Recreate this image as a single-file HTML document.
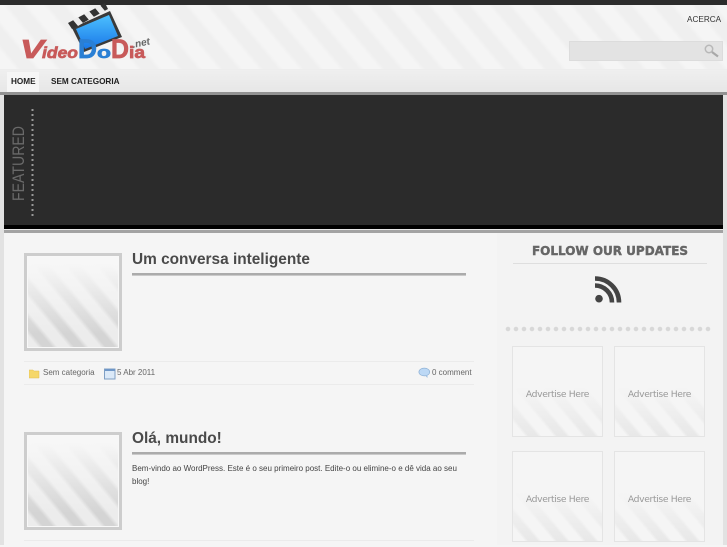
<!DOCTYPE html>
<html>
<head>
<meta charset="utf-8">
<style>
*{margin:0;padding:0;box-sizing:border-box}
html,body{width:727px;height:545px;overflow:hidden;background:#f5f5f5;font-family:"Liberation Sans",sans-serif}
.a{position:absolute}
#top{left:0;top:0;width:727px;height:5px;background:#2c2c2c}
#hdr{left:0;top:5px;width:727px;height:64px;background:repeating-linear-gradient(50deg,#f5f5f5 0,#f5f5f5 12px,#efefef 16px,#efefef 27px,#f5f5f5 31px)}
#nav{left:0;top:69px;width:727px;height:23px;background:linear-gradient(#efefef,#e7e7e7);border-top:1px solid #ededed}
#home{left:7px;top:72px;width:32px;height:20px;background:#f6f6f6}
.nv{font-size:8.2px;font-weight:bold;color:#222;top:77px;line-height:10px;white-space:nowrap}
#l1{left:0;top:92px;width:727px;height:3px;background:#929292}
#feat{left:4px;top:95px;width:719px;height:130px;background:#2b2b2b}
#blk{left:4px;top:225px;width:719px;height:4px;background:#000}
#l2{left:0;top:229px;width:727px;height:1px;background:#e8e8e8}
#l3{left:0;top:230px;width:727px;height:3px;background:#a3a3a3}
#sl{left:0;top:95px;width:4px;height:450px;background:#e2e2e2}
#sr{left:723px;top:95px;width:4px;height:450px;background:#e2e2e2}
#side{left:497px;top:233px;width:226px;height:312px;background:#f3f3f3}
.thumb{left:24px;width:98px;height:98px;border:3px solid #cdcdcd;outline:1px solid #f8f8f8;outline-offset:-4px;background:linear-gradient(#f7f7f7 8%,rgba(247,247,247,0) 85%),repeating-linear-gradient(50deg,#ececec 0,#ececec 9px,#d4d4d4 13px,#d4d4d4 20px,#ececec 24px)}
.ttl{left:132px;font-size:15.4px;font-weight:bold;color:#4a4a4a;line-height:20px;white-space:nowrap}
.rule{left:132px;width:334px;height:3px;background:#ababab;border-bottom:1px solid #cacaca}
.meta{font-size:8px;color:#666;line-height:10px;white-space:nowrap}
.hr{left:24px;width:450px;height:1px;background:#ebebeb}
.p{left:132px;font-size:8px;color:#444;line-height:13px;white-space:nowrap}
.ad{width:91px;height:91px;border:1px solid #e4e4e4;background:linear-gradient(#f5f5f5 45%,rgba(245,245,245,0) 100%),repeating-linear-gradient(50deg,#f5f5f5 0,#f5f5f5 9px,#e8e8e8 12px,#e8e8e8 19px,#f5f5f5 22px);color:#999;font-size:9.2px;text-align:center;line-height:95px;font-family:"DejaVu Sans",sans-serif;letter-spacing:-.35px}
</style>
</head>
<body>
<div class="a" id="top"></div>
<div class="a" id="hdr"></div>
<div class="a" id="nav"></div>
<div class="a" id="home"></div>
<div class="a nv" style="left:11px">HOME</div>
<div class="a nv" style="left:51px">SEM CATEGORIA</div>

<svg class="a" style="left:15px;top:0" width="145" height="62" viewBox="15 0 145 62">
  <defs><linearGradient id="bl" x1="0" y1="0" x2="0" y2="1"><stop offset="0" stop-color="#4cc0ff"/><stop offset="1" stop-color="#1a78e8"/></linearGradient></defs>
  <polygon points="72,28 110,11 122,37 84,52" fill="#3a3a3a"/>
  <polygon points="76,29 109,15 118,36 85,49" fill="url(#bl)"/>
  <polygon points="68,23 105,3 108,9 72,29" fill="#333"/>
  <path d="M73 20l5 6 5-3-5-6zM84 14l5 6 5-3-5-6zM95 8l5 6 5-3-5-6z" fill="#ececec"/>
  <g font-family="Liberation Sans" font-weight="bold" stroke-width=".7">
    <text x="20" y="58" font-style="italic" font-size="26" fill="#c85a5a" stroke="#c85a5a" textLength="24" lengthAdjust="spacingAndGlyphs">V</text>
    <text x="42" y="58" font-style="italic" font-size="16" fill="#c85a5a" stroke="#c85a5a" textLength="36" lengthAdjust="spacingAndGlyphs">ideo</text>
    <text x="78" y="58" font-size="27" fill="#2a7fd4" stroke="#2a7fd4" textLength="19" lengthAdjust="spacingAndGlyphs">D</text>
    <text x="97" y="58" font-size="17" fill="#2a7fd4" stroke="#2a7fd4" textLength="14" lengthAdjust="spacingAndGlyphs">o</text>
    <text x="111" y="58" font-size="27" fill="#c85a5a" stroke="#c85a5a" textLength="18" lengthAdjust="spacingAndGlyphs">D</text>
    <text x="129" y="58" font-size="17" fill="#c85a5a" stroke="#c85a5a" textLength="16" lengthAdjust="spacingAndGlyphs">ia</text>
  </g>
  <text x="133" y="48" font-family="Liberation Sans" font-weight="bold" font-style="italic" font-size="10" fill="#666" transform="rotate(-12 133 48)">.net</text>
</svg>

<div class="a" style="left:687px;top:15px;font-size:8.2px;color:#333;line-height:10px">ACERCA</div>
<div class="a" style="left:569px;top:41px;width:154px;height:20px;background:#e3e3e3;border:1px solid #dcdcdc"></div>
<svg class="a" style="left:703px;top:44px" width="17" height="14" viewBox="0 0 17 14"><circle cx="6" cy="5" r="3.7" fill="none" stroke="#b8b8b8" stroke-width="1.5"/><path d="M9 8l6 4.5" stroke="#a8a8a8" stroke-width="2.2"/></svg>

<div class="a" id="l1"></div>
<div class="a" id="feat"></div>
<div class="a" id="blk"></div>
<div class="a" id="l2"></div>
<div class="a" id="l3"></div>
<div class="a" id="sl"></div>
<div class="a" id="sr"></div>
<div class="a" id="side"></div>

<svg class="a" style="left:0;top:95px" width="60" height="130" viewBox="0 95 60 130">
  <text transform="translate(24 201) rotate(-90)" font-family="Liberation Sans" font-size="16.5" fill="#6a6a6a" textLength="75" lengthAdjust="spacingAndGlyphs">FEATURED</text>
  <line x1="32.5" y1="109" x2="32.5" y2="216" stroke="#999" stroke-width="2" stroke-dasharray="2 3"/>
</svg>

<div class="a thumb" style="top:253px"></div>
<div class="a ttl" style="top:250px">Um conversa inteligente</div>
<div class="a rule" style="top:273px"></div>
<div class="a hr" style="top:361px"></div>
<div class="a hr" style="top:384px"></div>

<svg class="a" style="left:29px;top:368px" width="11" height="11" viewBox="0 0 11 11"><path d="M0 2h4l1 1h5v7H0z" fill="#f5d76a" stroke="#e3bd50" stroke-width=".5"/></svg>
<div class="a meta" style="left:43px;top:368px">Sem categoria</div>
<svg class="a" style="left:104px;top:367px" width="12" height="13" viewBox="0 0 12 13"><rect x=".5" y="2" width="10.5" height="10" fill="#dbe9f8" stroke="#7f9fc4"/><rect x="1" y="2" width="10" height="2" fill="#6f97c8"/></svg>
<div class="a meta" style="left:117px;top:368px">5 Abr 2011</div>
<svg class="a" style="left:418px;top:367px" width="13" height="12" viewBox="0 0 13 12"><ellipse cx="6.3" cy="5" rx="5.4" ry="3.9" fill="#bcd8f5" stroke="#8fb2d6" stroke-width=".7"/><path d="M7 8.5l2.5 2.5v-3z" fill="#9fc0e2"/></svg>
<div class="a meta" style="left:432px;top:368px">0 comment</div>

<div class="a thumb" style="top:432px"></div>
<div class="a ttl" style="top:429px">Olá, mundo!</div>
<div class="a rule" style="top:452px"></div>
<div class="a p" style="top:462px">Bem-vindo ao WordPress. Este é o seu primeiro post. Edite-o ou elimine-o e dê vida ao seu</div>
<div class="a p" style="top:475px">blog!</div>
<div class="a hr" style="top:540px"></div>

<div class="a" style="left:513px;top:244px;width:194px;text-align:center;font-family:'DejaVu Sans',sans-serif;font-weight:bold;font-size:12px;line-height:15px;color:#666;white-space:nowrap;-webkit-text-stroke:.4px #666">FOLLOW OUR UPDATES</div>
<div class="a" style="left:513px;top:263px;width:194px;height:1px;background:#dedede"></div>
<svg class="a" style="left:595px;top:276px" width="27" height="27" viewBox="0 0 27 27">
  <circle cx="4" cy="22.7" r="3.8" fill="#444"/>
  <path d="M0 9.5a17 17 0 0 1 17 17" fill="none" stroke="#444" stroke-width="4.6"/>
  <path d="M0 2.5a24 24 0 0 1 24 24" fill="none" stroke="#444" stroke-width="4.6"/>
</svg>
<svg class="a" style="left:505px;top:325px" width="210" height="8" viewBox="0 0 210 8">
  <line x1="3" y1="4" x2="207" y2="4" stroke="#d8d8d8" stroke-width="4.6" stroke-linecap="round" stroke-dasharray="0 8"/>
</svg>

<div class="a ad" style="left:512px;top:346px">Advertise Here</div>
<div class="a ad" style="left:614px;top:346px">Advertise Here</div>
<div class="a ad" style="left:512px;top:451px">Advertise Here</div>
<div class="a ad" style="left:614px;top:451px">Advertise Here</div>
</body>
</html>
